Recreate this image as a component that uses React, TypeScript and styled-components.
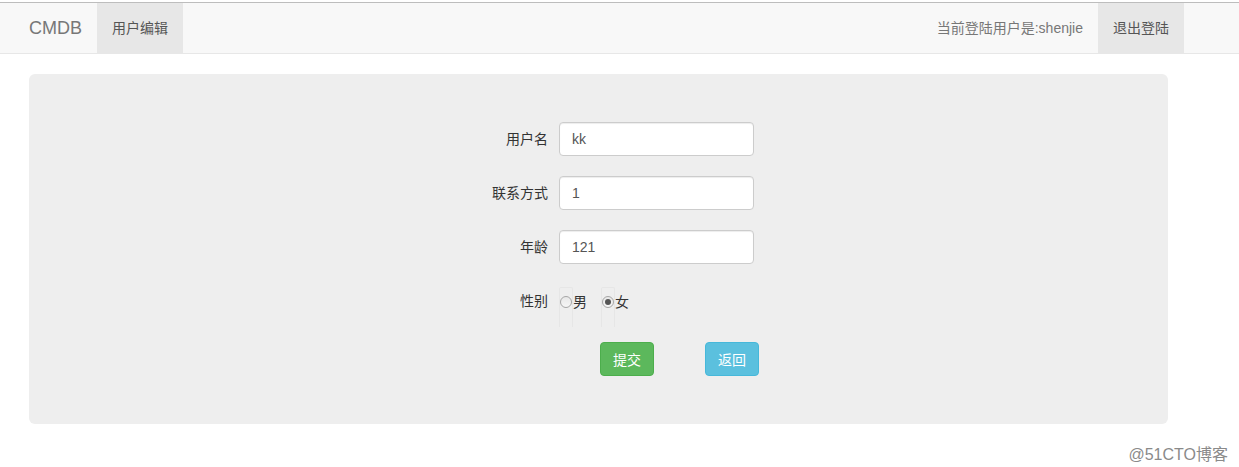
import styled, {createGlobalStyle} from "styled-components";

const GlobalStyle = createGlobalStyle`
    body {
        margin: 0;
        background: #fff;
        font-family: "Liberation Sans", "Noto Sans CJK SC", Arial, sans-serif;
        font-size: 14px;
        color: #333;
    }
`

type FieldType = {
    label: string
    value: string
}

const fields: FieldType[] = [
    {label: '用户名', value: 'kk'},
    {label: '联系方式', value: '1'},
    {label: '年龄', value: '121'},
]

export default function App() {
    return (
        <Page>
            <GlobalStyle/>
            <Navbar>
                <NavLeft>
                    <Brand>CMDB</Brand>
                    <NavItem active>用户编辑</NavItem>
                </NavLeft>
                <NavRight>
                    <NavText>当前登陆用户是:shenjie</NavText>
                    <NavItem active>退出登陆</NavItem>
                </NavRight>
            </Navbar>

            <Jumbotron>
                <Form>
                    {fields.map(f => (
                        <Row key={f.label}>
                            <Label>{f.label}</Label>
                            <Input defaultValue={f.value}/>
                        </Row>
                    ))}
                    <Row>
                        <Label>性别</Label>
                        <RadioGroup>
                            <RadioLabel>
                                <RadioBox><Radio type="radio" name="sex"/></RadioBox>男
                            </RadioLabel>
                            <RadioLabel>
                                <RadioBox><Radio type="radio" name="sex" defaultChecked/></RadioBox>女
                            </RadioLabel>
                        </RadioGroup>
                    </Row>
                    <Actions>
                        <Btn variant={'success'}>提交</Btn>
                        <Btn variant={'info'}>返回</Btn>
                    </Actions>
                </Form>
            </Jumbotron>

            <Watermark>@51CTO博客</Watermark>
        </Page>
    );
}

const Page = styled.div`
    padding-top: 2px;
    min-height: 465px;
`

const Navbar = styled.nav`
    display: flex;
    justify-content: space-between;
    height: 50px;
    padding: 0 55px 0 14px;
    background: #f8f8f8;
    border-top: 1px solid #bdbdbd;
    border-bottom: 1px solid #e7e7e7;
`

const NavLeft = styled.div`
    display: flex;
`

const NavRight = styled.div`
    display: flex;
    gap: 15px;
`

const Brand = styled.a`
    padding: 0 15px;
    line-height: 50px;
    font-size: 18px;
    color: #777;
`

const NavItem = styled.a<{ active?: boolean }>`
    padding: 0 15px;
    line-height: 50px;
    color: #555;
    background: ${p => p.active ? '#e7e7e7' : 'transparent'};
`

const NavText = styled.span`
    line-height: 50px;
    color: #777;
`

const Jumbotron = styled.div`
    margin: 20px 71px 0 29px;
    height: 350px;
    box-sizing: border-box;
    padding-top: 48px;
    background: #eee;
    border-radius: 6px;
`

const Form = styled.form`
    display: grid;
    grid-template-columns: 130px 195px;
    column-gap: 11px;
    row-gap: 20px;
    padding-left: 389px;
`

const Row = styled.div`
    display: contents;
`

const Label = styled.label`
    height: 34px;
    display: flex;
    align-items: center;
    justify-content: flex-end;
    padding-bottom: 2px;
    box-sizing: border-box;
    color: #333;
`

const Input = styled.input`
    height: 34px;
    box-sizing: border-box;
    padding: 6px 12px;
    border: 1px solid #ccc;
    border-radius: 4px;
    background: #fff;
    font: inherit;
    color: #555;
    box-shadow: inset 0 1px 1px rgba(0, 0, 0, .075);
    outline: none;
`

const RadioGroup = styled.div`
    height: 34px;
    display: flex;
    align-items: center;
    gap: 14px;
`

const RadioLabel = styled.label`
    display: flex;
    align-items: center;
    color: #333;
`

const RadioBox = styled.span`
    display: flex;
    align-items: center;
    height: 40px;
    margin-top: 12px;
    padding-bottom: 12px;
    box-sizing: border-box;
    border: 1px solid #e6e6e6;
    border-bottom: none;
    border-radius: 2px 2px 0 0;
`

const Radio = styled.input`
    appearance: none;
    width: 12px;
    height: 12px;
    margin: 0;
    border: 1px solid #a6a6a6;
    border-radius: 50%;
    background: linear-gradient(#e8e8e8, #f6f6f6);
    box-sizing: border-box;
    position: relative;

    &:checked::after {
        content: '';
        position: absolute;
        left: 2px;
        top: 2px;
        width: 6px;
        height: 6px;
        border-radius: 50%;
        background: #555;
    }
`

const Actions = styled.div`
    grid-column: 2;
    display: flex;
    gap: 51px;
    padding-left: 41px;
    margin-top: 4px;
`

const Btn = styled.button<{ variant: 'success' | 'info' }>`
    height: 34px;
    padding: 6px 12px;
    font: inherit;
    color: #fff;
    border-radius: 4px;
    border: 1px solid ${p => p.variant === 'success' ? '#4cae4c' : '#46b8da'};
    background: ${p => p.variant === 'success' ? '#5cb85c' : '#5bc0de'};
    white-space: nowrap;
`

const Watermark = styled.div`
    text-align: right;
    padding-right: 11px;
    margin-top: 17px;
    font-size: 16px;
    color: #8a8a8a;
`
